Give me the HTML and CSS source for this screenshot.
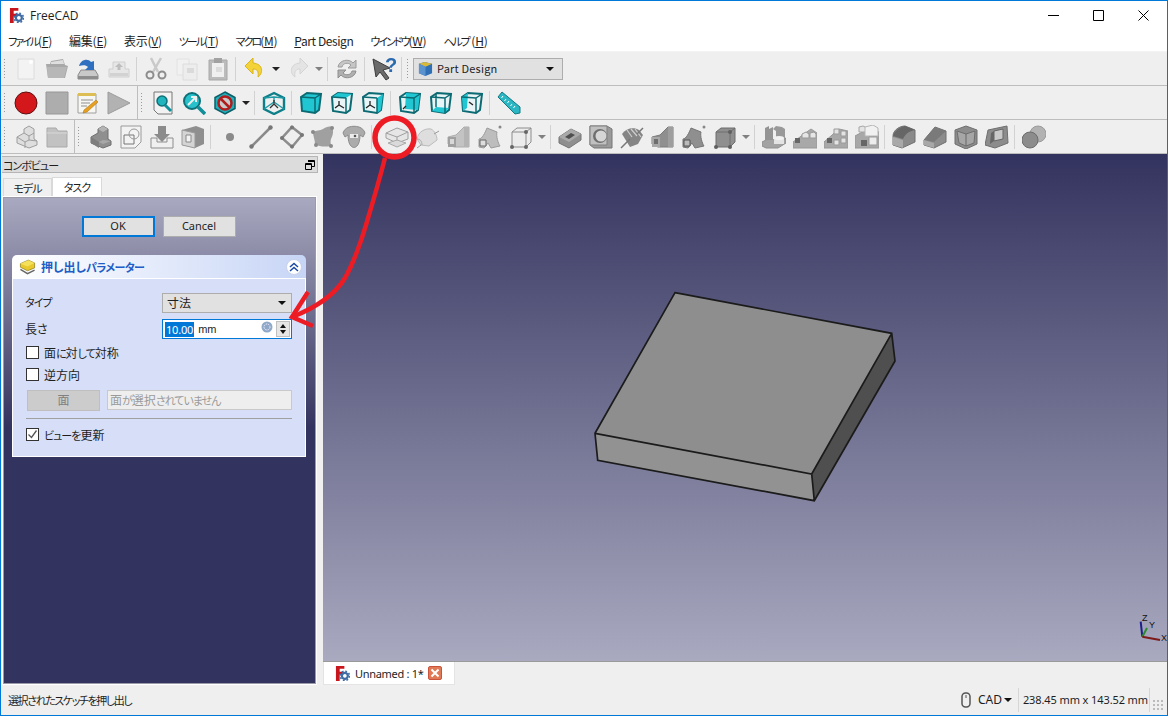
FILE: index.html
```html
<!DOCTYPE html>
<html lang="ja">
<head>
    <meta charset="UTF-8">
    <title>FreeCAD</title>
    <link rel="stylesheet" href="styles.css">
</head>
<body>
    <!-- Shared icons -->
    <svg class="defs" width="0" height="0">
        <defs>
            <symbol id="logo" viewBox="0 0 16 16"><path d="M1 0h9v3H5v3h4v3H5v7H1z" fill="#c8161d"/><circle cx="10.5" cy="10.5" r="3.2" fill="none" stroke="#3f6ca5" stroke-width="2.4"/><circle cx="10.5" cy="10.5" r="5" fill="none" stroke="#3f6ca5" stroke-width="1.6" stroke-dasharray="2 1.9"/></symbol>
            <symbol id="new" viewBox="0 0 24 24"><path d="M4 2h16v20H4z" fill="#f3f3f3" stroke="#dcdcdc"/><circle cx="17" cy="5" r="2" fill="#fff"/></symbol>
            <symbol id="open" viewBox="0 0 24 24"><path d="M3 21 1 7h4l1-3 12-2 2 6 3 1-3 12z" fill="#a8a8a8"/><path d="M6 5l12-2 1 4H6z" fill="#dedede"/><path d="M3 21 2 10h20l-3 11z" fill="#b7b7b7"/></symbol>
            <symbol id="save" viewBox="0 0 24 24"><path d="M5 13h14l3 5v4H2v-4z" fill="#c9c9c9" stroke="#8a8a8a"/><path d="M2 19h20v3H2z" fill="#8d8d8d"/><path d="M3 9C5 2 12 1 15 5l3-1v9h-9l3-3c-2-2-5-2-9-1z" fill="#2f6fc0"/></symbol>
            <symbol id="saveas" viewBox="0 0 24 24"><path d="M6 5h12v7h4v8H2v-8h4z" fill="#e6e6e6" stroke="#cfcfcf"/><path d="M12 6l4 4h-2.500v3h-3v-3H8z" fill="#bdbdbd"/><path d="M3 16h18v3H3z" fill="#d2d2d2"/></symbol>
            <symbol id="cut" viewBox="0 0 24 24"><path d="M7 1l7 14M17 1 9 15" stroke="#c9c9c9" stroke-width="2.500" fill="none"/><circle cx="6" cy="18" r="3.500" fill="none" stroke="#8c8c8c" stroke-width="2"/><circle cx="18" cy="18" r="3.500" fill="none" stroke="#8c8c8c" stroke-width="2"/></symbol>
            <symbol id="copy" viewBox="0 0 24 24"><path d="M2 2h12v16H2z" fill="#f1f1f1" stroke="#e2e2e2"/><path d="M8 7h14v16H8z" fill="#ededed" stroke="#dcdcdc"/><path d="M12 11h7v5h-7z" fill="#dadada"/></symbol>
            <symbol id="paste" viewBox="0 0 24 24"><path d="M3 3h18v20H3z" fill="#bcbcbc" stroke="#a8a8a8"/><path d="M6 6h12v14H6z" fill="#f0f0f0"/><path d="M8 1h8v5H8z" fill="#a2a2a2"/><path d="M10 10h6v5h-6z" fill="#dcdcdc"/></symbol>
            <symbol id="undo" viewBox="0 0 24 24"><path d="M10 1 2 9l8 8v-5c4 0 6 2 5 8 5-3 6-13-5-14z" fill="#f3d23a" stroke="#d9b41a"/></symbol>
            <symbol id="redo" viewBox="0 0 24 24"><path d="M14 1l8 8-8 8v-5c-4 0-6 2-5 8-5-3-6-13 5-14z" fill="#e4e4e4" stroke="#d4d4d4"/></symbol>
            <symbol id="refresh" viewBox="0 0 24 24"><path d="M3 10C4 3 14 1 18 6l3-3v8h-8l3-3c-3-3-8-2-9 2z" fill="#c6c6c6" stroke="#9c9c9c"/><path d="M21 14c-1 7-11 9-15 4l-3 3v-8h8l-3 3c3 3 8 2 9-2z" fill="#b0b0b0" stroke="#8e8e8e"/></symbol>
            <symbol id="whats" viewBox="0 0 24 24"><path d="M1 2l17 9-7 2 6 8-3 2-6-8-4 5z" fill="#6a6a6a" stroke="#3b3b3b"/><text x="13" y="15" font-size="20" font-weight="700" fill="#2c6ab0" font-family="Liberation Sans">?</text></symbol>
            <symbol id="record" viewBox="0 0 24 24"><circle cx="12" cy="12" r="11" fill="#d3171b" stroke="#5c1012"/></symbol>
            <symbol id="stop" viewBox="0 0 24 24"><path d="M1 1h22v22H1z" fill="#adadad" stroke="#979797"/></symbol>
            <symbol id="note" viewBox="0 0 24 24"><path d="M2 3h18v19H2z" fill="#f6f6f2" stroke="#9f9f9f"/><path d="M2 2h18v3H2z" fill="#dcbe55"/><path d="M5 9h12M5 12h9M5 15h6" stroke="#8f8f8f"/><path d="M8 19 20 9l2 2-11 10-4 1z" fill="#e8a020" stroke="#a06a10" stroke-width=".5"/></symbol>
            <symbol id="play" viewBox="0 0 24 24"><path d="M1 1l22 11L1 23z" fill="#b2b2b2" stroke="#9c9c9c"/></symbol>
            <symbol id="fitall" viewBox="0 0 24 24"><path d="M3 1h18v22H7l-4-4z" fill="#f2f2f2" stroke="#777"/><circle cx="11" cy="10" r="5" fill="#1fb4be" stroke="#0e6f78" stroke-width="1.500"/><path d="M14 14l6 6" stroke="#0e8f9a" stroke-width="3"/></symbol>
            <symbol id="fitsel" viewBox="0 0 24 24"><circle cx="10" cy="10" r="8" fill="#27c1cc" stroke="#0e6f78" stroke-width="2"/><path d="M6 14l7-7M9 6h5v5" stroke="#eee" stroke-width="2" fill="none"/><path d="M16 16l7 7" stroke="#0e8f9a" stroke-width="3.500"/></symbol>
            <symbol id="nodraw" viewBox="0 0 24 24"><path d="M12 1l10 5.500v11L12 23 2 17.500v-11z" fill="#1fb0bb" stroke="#0c5f68" stroke-width="1.500"/><circle cx="12" cy="12" r="6.500" fill="#c9c9c9" stroke="#b01c1c" stroke-width="2.500"/><path d="M7.500 7.500l9 9" stroke="#b01c1c" stroke-width="2.500"/></symbol>
            <symbol id="viso" viewBox="0 0 24 24"><path d="M12 2l10 5v11l-10 5-10-5V7z" fill="none" stroke="#0e7f89" stroke-width="2.400"/><path d="M2 7l10-1 10 1M12 6v5M2 18l10-7 10 7" fill="none" stroke="#1d9aa5" stroke-width="1.400"/><path d="M12 9v4M8 17l4-4 4 4" stroke="#333" stroke-width="1.300" fill="none"/></symbol>
            <symbol id="vfront" viewBox="0 0 24 24"><path d="M2 6l6-4 14 1-2 16-4 3-13-2z" fill="#20c6d2" stroke="#0c6a73" stroke-width="2"/><path d="M2 6l14 1 0 15M16 7l6-4" fill="none" stroke="#0c6a73" stroke-width="1.500"/></symbol>
            <symbol id="vtop" viewBox="0 0 24 24"><path d="M2 6l6-4 14 1-2 16-4 3-13-2z" fill="#e8f4f5" stroke="#0c6a73" stroke-width="2"/><path d="M2 6l6-4 14 1-6 4z" fill="#20c6d2"/><path d="M16 7v15M2 6l14 1" stroke="#0c6a73" stroke-width="1.500" fill="none"/><path d="M9 10v4l-4 3M9 14l5 3" stroke="#222" stroke-width="1.300" fill="none"/></symbol>
            <symbol id="vright" viewBox="0 0 24 24"><path d="M2 6l6-4 14 1-2 16-4 3-13-2z" fill="#e8f4f5" stroke="#0c6a73" stroke-width="2"/><path d="M16 7l6-4-2 16-4 3z" fill="#20c6d2"/><path d="M16 7v15M2 6l14 1" stroke="#0c6a73" stroke-width="1.500" fill="none"/><path d="M9 10v4l-4 3M9 14l5 3" stroke="#222" stroke-width="1.300" fill="none"/></symbol>
            <symbol id="vrear" viewBox="0 0 24 24"><path d="M2 6l6-4 14 1-2 16-4 3-13-2z" fill="#e8f4f5" stroke="#0c6a73" stroke-width="2"/><path d="M8 2l14 1-2 16-13-1z" fill="#20c6d2"/><path d="M2 6l14 1M16 7l6-4M16 7v15" stroke="#0c6a73" stroke-width="1.500" fill="none"/><path d="M8 15l-3 3" stroke="#222" stroke-width="1.300"/></symbol>
            <symbol id="vbottom" viewBox="0 0 24 24"><path d="M2 6l6-4 14 1-2 16-4 3-13-2z" fill="#e8f4f5" stroke="#0c6a73" stroke-width="2"/><path d="M7 16l13 1-4 5-13-2z" fill="#20c6d2"/><path d="M16 7v15M2 6l14 1M16 7l6-4M7 16V3" stroke="#0c6a73" stroke-width="1.500" fill="none"/></symbol>
            <symbol id="vleft" viewBox="0 0 24 24"><path d="M2 6l6-4 14 1-2 16-4 3-13-2z" fill="#e8f4f5" stroke="#0c6a73" stroke-width="2"/><path d="M2 6l6-4-1 15-4 3z" fill="#20c6d2"/><path d="M16 7v15M2 6l14 1M16 7l6-4" stroke="#0c6a73" stroke-width="1.500" fill="none"/><path d="M9 11l4 3" stroke="#222" stroke-width="1.300"/></symbol>
            <symbol id="ruler" viewBox="0 0 24 24"><path d="M1 6l4-5 18 15v6l-5 1z" fill="#2ab6c2" stroke="#127a84"/><path d="M6 5l-1.500 2M9 8l-1.500 2M12 10l-1.500 2M15 13l-1.500 2M18 15l-1.500 2" stroke="#fff"/></symbol>
            <symbol id="step-pale" viewBox="0 0 24 24"><path d="M3 12l7-4V4l5-3 5 3v10l3 2v4l-8 3-12-5z" fill="#dedede" stroke="#9d9d9d"/><path d="M10 8l5 3 5-3M15 11v4M3 12l8 5v6M11 17l4-2 8 1" fill="none" stroke="#9d9d9d"/></symbol>
            <symbol id="folder" viewBox="0 0 24 24"><path d="M2 3h9l2 3h9v16H2z" fill="#c2c2c2" stroke="#a9a9a9"/><path d="M2 8h20" stroke="#d8d8d8"/></symbol>
            <symbol id="step" viewBox="0 0 24 24"><path d="M3 12l7-4V4l5-3 5 3v10l3 2v4l-8 3-12-5z" fill="#8f8f8f" stroke="#6e6e6e"/><path d="M3 12l8 5v6L3 18z" fill="#7d7d7d"/><path d="M10 4l5 3 5-3-5-3z" fill="#b4b4b4"/><path d="M11 17l4-2 8 1-8 3z" fill="#a8a8a8"/></symbol>
            <symbol id="sketch" viewBox="0 0 24 24"><path d="M2 1h20v16l-6 6H2z" fill="#f3f3f3" stroke="#9a9a9a"/><path d="M5 10h10v9H5z" fill="none" stroke="#777"/><circle cx="15" cy="9" r="5" fill="none" stroke="#999"/></symbol>
            <symbol id="import" viewBox="0 0 24 24"><path d="M1 13h6v4h10v-4h6v10H1z" fill="#f0f0f0" stroke="#8d8d8d"/><path d="M8 1h8v8h4l-8 8-8-8h4z" fill="#8b8b8b"/></symbol>
            <symbol id="cubedoc" viewBox="0 0 24 24"><path d="M1 5l14-4 8 3v15l-9 4-13-3z" fill="#8f8f8f"/><path d="M1 5l13 3v15L1 20z" fill="#d4d4d4" stroke="#9a9a9a"/><path d="M5 10h5v7H5z" fill="#f2f2f2" stroke="#888"/></symbol>
            <symbol id="point" viewBox="0 0 24 24"><circle cx="12" cy="12" r="4" fill="#8a8a8a"/></symbol>
            <symbol id="line" viewBox="0 0 24 24"><path d="M2 22 22 2" stroke="#8a8a8a" stroke-width="2.500"/><circle cx="2.500" cy="21.500" r="2.200" fill="#777"/><circle cx="21.500" cy="2.500" r="2.200" fill="#777"/></symbol>
            <symbol id="diamond" viewBox="0 0 24 24"><path d="M12 2l10 8-10 12L2 13z" fill="none" stroke="#8d8d8d" stroke-width="2.500"/><circle cx="12" cy="2.500" r="2" fill="#777"/><circle cx="22" cy="10" r="2" fill="#777"/><circle cx="2" cy="13" r="2" fill="#777"/><circle cx="12" cy="21.500" r="2" fill="#777"/></symbol>
            <symbol id="blob" viewBox="0 0 24 24"><path d="M2 7c3-2 7-1 10-3 3-2 6-3 9-2 2 4 1 8-1 12-1 3 0 5 0 7-5 1-12 1-16-2 0-4-2-8-2-12z" fill="#a0a0a0"/><circle cx="21" cy="3" r="2" fill="#8a8a8a"/><circle cx="2" cy="7" r="2" fill="#8a8a8a"/><circle cx="20" cy="21" r="2" fill="#8a8a8a"/><circle cx="5" cy="20" r="2" fill="#8a8a8a"/></symbol>
            <symbol id="sheep" viewBox="0 0 24 24"><path d="M7 2c3-1 7-1 10 0 3 1 5 3 6 6l-2 4-3-2c0 5-1 9-3 11-2 2-4 2-6 0-2-2-3-6-3-11l-3 2-2-4c1-3 3-5 6-6z" fill="#ababab" stroke="#8c8c8c"/><path d="M8 9h8v4H8z" fill="#ececec"/><circle cx="13" cy="11" r="1.300" fill="#555"/></symbol>
            <symbol id="pad" viewBox="0 0 24 24"><path d="M1 8l11-5 11 4v7l-11 4-11-5z" fill="#e6e6e6" stroke="#9f9f9f"/><path d="M1 8l11 4 11-5M12 12v6" fill="none" stroke="#9f9f9f"/><path d="M3 18l9-3 9 3-9 4z" fill="#dadada" stroke="#a8a8a8"/></symbol>
            <symbol id="revolve" viewBox="0 0 24 24"><path d="M1 14C2 7 9 3 15 4c4 2 6 7 6 11l-8 6-8-1z" fill="#dedede" stroke="#bbb"/><path d="M1 14c3 0 5 2 5 6" fill="none" stroke="#aaa"/><path d="M18 9l5-3M1 23l4-3" stroke="#999"/></symbol>
            <symbol id="loft" viewBox="0 0 24 24"><path d="M1 12l8-2 8-8h5v20H7l-6-3z" fill="#c3c3c3" stroke="#adadad"/><path d="M17 2h5v20h-5z" fill="#b4b4b4"/><path d="M1 12h8v10H1z" fill="#a0a0a0"/><path d="M3 14h4v5H3z" fill="#d8d8d8"/></symbol>
            <symbol id="sweep" viewBox="0 0 24 24"><path d="M1 22v-8c3 0 6-6 8-11l10 4c-1 4 1 11 3 14l-9 2-3-5-4 5z" fill="#bdbdbd" stroke="#9a9a9a"/><path d="M2 15h6v6H2z" fill="#ddd" stroke="#666"/><circle cx="22" cy="2" r="1.500" fill="#888"/></symbol>
            <symbol id="addbox" viewBox="0 0 24 24"><path d="M3 7l5-4h14v14l-5 5H3z" fill="#ececec" stroke="#8c8c8c"/><path d="M3 7h14v15M17 7l5-4" fill="none" stroke="#8c8c8c"/><circle cx="17" cy="7" r="2" fill="#666"/><circle cx="3" cy="22" r="2" fill="#666"/><circle cx="17" cy="22" r="2" fill="#666"/></symbol>
            <symbol id="pocket" viewBox="0 0 24 24"><path d="M1 12 13 4l10 5v6l-12 8-10-5z" fill="#8f8f8f" stroke="#747474"/><path d="M1 12l10 5 12-8-10-5z" fill="#a9a9a9"/><path d="M7 12l6-4 4 2-6 4z" fill="#4f4f4f"/></symbol>
            <symbol id="hole" viewBox="0 0 24 24"><path d="M1 1h17l5 3v19H5l-4-3z" fill="#9a9a9a" stroke="#777"/><path d="M1 1h17v19H1z" fill="#c0c0c0" stroke="#808080"/><circle cx="11" cy="11" r="7" fill="#6e6e6e"/><circle cx="12" cy="11" r="5.500" fill="#d6d6d6"/></symbol>
            <symbol id="groove" viewBox="0 0 24 24"><path d="M2 9C6 3 14 2 19 5l4 5-5 9-8 3z" fill="#858585"/><path d="M7 5l5 7M11 4l6 7M15 4l6 8" stroke="#cfcfcf" stroke-width="1.200"/><path d="M1 23l9-9M17 9l6-6" stroke="#777" stroke-width="1.500"/></symbol>
            <symbol id="subloft" viewBox="0 0 24 24"><path d="M1 12l8-2 8-8h5v20H7l-6-3z" fill="#8f8f8f" stroke="#7a7a7a"/><path d="M17 2h5v20h-5z" fill="#9e9e9e"/><path d="M1 12h8v10H1z" fill="#a8a8a8"/><path d="M3 14h4v5H3z" fill="#6e6e6e"/></symbol>
            <symbol id="subsweep" viewBox="0 0 24 24"><path d="M1 22v-8c3 0 6-6 8-11l10 4c-1 4 1 11 3 14l-9 2-3-5-4 5z" fill="#8f8f8f" stroke="#747474"/><path d="M2 15h6v6H2z" fill="#bbb" stroke="#555"/><circle cx="22" cy="2" r="1.500" fill="#888"/></symbol>
            <symbol id="subbox" viewBox="0 0 24 24"><path d="M3 7l5-4h14v14l-5 5H3z" fill="#8f8f8f" stroke="#6e6e6e"/><path d="M3 7h14v15M17 7l5-4" fill="none" stroke="#6e6e6e"/><circle cx="17" cy="7" r="2" fill="#5f5f5f"/><circle cx="3" cy="22" r="2" fill="#5f5f5f"/><circle cx="17" cy="22" r="2" fill="#5f5f5f"/></symbol>
            <symbol id="mirror" viewBox="0 0 24 24"><path d="M0 17l8-4 8 4 8-4v5l-8 5H4l-4-2z" fill="#a2a2a2" stroke="#909090"/><path d="M3 3l4-2v3l4-2v13H3z" fill="#949494"/><path d="M14 6l-3-2 3-3 6 1 3 2v11h-9z" fill="#999"/><path d="M12 13h10v6H12z" fill="#e3e3e3"/><ellipse cx="17" cy="13" rx="5" ry="2" fill="#f2f2f2"/></symbol>
            <symbol id="linear" viewBox="0 0 24 24"><path d="M0 17 18 4l6 4v15H0z" fill="#a8a8a8" stroke="#989898"/><path d="M2 13h5v5H2z" fill="#666"/><path d="M9 9l4-2 3 2v4H9zM17 8l4-1 2 2v4h-6z" fill="#e6e6e6" stroke="#999"/></symbol>
            <symbol id="polar" viewBox="0 0 24 24"><path d="M0 17 15 4l9 2v17H0z" fill="#a8a8a8" stroke="#989898"/><path d="M3 13h5v5H3z" fill="#666"/><path d="M10 4h5v5h-5zM17 6h5v5h-5zM17 13h5v5h-5zM10 15h5v5h-5z" fill="#e3e3e3" stroke="#999"/></symbol>
            <symbol id="multi" viewBox="0 0 24 24"><path d="M0 11 13 4l11 3v16H0z" fill="#a8a8a8" stroke="#989898"/><path d="M4 2l4-1 4 2v4H4z" fill="#e3e3e3" stroke="#a5a5a5"/><path d="M10 2l8-2 5 3v8H10z" fill="#f1f1f1" stroke="#b5b5b5"/><path d="M14 12h8v8h-8z" fill="#ececec" stroke="#999"/><path d="M6 15h6v6H6z" fill="#666"/></symbol>
            <symbol id="fillet" viewBox="0 0 24 24"><path d="M1 11C1 5 8 1 13 1l10 4v12l-13 6-9-3z" fill="#8a8a8a" stroke="#707070"/><path d="M1 11C2 6 8 2 13 1l10 4c-6 1-10 4-12 9z" fill="#666"/><path d="M1 12l10 3v8l-10-3z" fill="#a8a8a8"/></symbol>
            <symbol id="chamfer" viewBox="0 0 24 24"><path d="M1 15 12 2l11 4v11l-12 6-10-3z" fill="#8d8d8d" stroke="#707070"/><path d="M1 15 12 2l11 4-12 11z" fill="#7a7a7a"/><path d="M1 15l10 3v5l-10-3z" fill="#a8a8a8"/></symbol>
            <symbol id="draft" viewBox="0 0 24 24"><path d="M1 5l11-4 11 4v14l-11 5-11-5z" fill="#8c8c8c" stroke="#6e6e6e"/><path d="M3 6l9 3 9-3-1 12-8 3-7-3z" fill="#a6a6a6" stroke="#6e6e6e"/><path d="M12 9v12" stroke="#666"/></symbol>
            <symbol id="thick" viewBox="0 0 24 24"><path d="M3 5l19-4 1 17-13 5-10-3z" fill="#8c8c8c" stroke="#6e6e6e"/><path d="M9 6l9-2v10l-9 2z" fill="#c9c9c9" stroke="#666"/><path d="M9 6v10l-4 3 1-11z" fill="#666"/></symbol>
            <symbol id="bool" viewBox="0 0 24 24"><circle cx="16" cy="9" r="8" fill="#b2b2b2" stroke="#9a9a9a"/><circle cx="8" cy="15" r="8" fill="#8c8c8c" stroke="#6c6c6c"/></symbol>
        </defs>
    </svg>

    <div class="window">
        <!-- Title bar -->
        <div class="title-bar">
            <svg class="title-logo"><use href="#logo"/></svg>
            <span class="title-text">FreeCAD</span>
            <div class="win-buttons">
                <span class="win-btn"><svg width="11" height="11"><path d="M0 5.500h11" stroke="#000"/></svg></span>
                <span class="win-btn"><svg width="11" height="11"><path d="M.5.500h10v10H.5z" fill="none" stroke="#000"/></svg></span>
                <span class="win-btn"><svg width="11" height="11"><path d="M.5.500l10 10M10.500.500l-10 10" stroke="#000"/></svg></span>
            </div>
        </div>

        <!-- Menu -->
        <div class="menu-bar">
            <a><span class="k">ファイル</span>(<u>F</u>)</a>
            <a>編集(<u>E</u>)</a>
            <a>表示(<u>V</u>)</a>
            <a><span class="k">ツール</span>(<u>T</u>)</a>
            <a><span class="k">マクロ</span>(<u>M</u>)</a>
            <a class="latin"><u>P</u>art Design</a>
            <a><span class="k">ウインドウ</span>(<u>W</u>)</a>
            <a><span class="k">ヘルプ</span> (<u>H</u>)</a>
        </div>

        <!-- Toolbars -->
        <div class="tool-row">
            <div class="toolbar">
                <i class="grip"></i>
                <b class="tb"><svg class="ico"><use href="#new"/></svg></b>
                <b class="tb"><svg class="ico"><use href="#open"/></svg></b>
                <b class="tb"><svg class="ico"><use href="#save"/></svg></b>
                <b class="tb"><svg class="ico"><use href="#saveas"/></svg></b>
                <i class="sep"></i>
                <b class="tb"><svg class="ico"><use href="#cut"/></svg></b>
                <b class="tb"><svg class="ico"><use href="#copy"/></svg></b>
                <b class="tb"><svg class="ico"><use href="#paste"/></svg></b>
                <i class="sep"></i>
                <b class="tb"><svg class="ico"><use href="#undo"/></svg></b><i class="drop"></i>
                <b class="tb"><svg class="ico"><use href="#redo"/></svg></b><i class="drop pale"></i>
                <i class="sep"></i>
                <b class="tb"><svg class="ico"><use href="#refresh"/></svg></b>
                <i class="sep"></i>
                <b class="tb"><svg class="ico"><use href="#whats"/></svg></b>
                <i class="sep"></i>
            </div>
            <div class="toolbar wb-bar">
                <i class="grip"></i>
                <div class="combo">
                    <svg class="combo-ico" viewBox="0 0 16 16"><path d="M1 3l6-2 8 2v10l-7 3-7-3z" fill="#2f6fb5"/><path d="M1 3l6-2 8 2-7 3z" fill="#d9b93c"/><path d="M1 3l7 3v10l-7-3z" fill="#5b93cf"/></svg>
                    <span class="combo-text">Part Design</span>
                    <i class="combo-arrow"></i>
                </div>
            </div>
        </div>
        <div class="tool-row">
            <div class="toolbar bounded macro-bar">
                <i class="grip"></i>
                <b class="tb"><svg class="ico"><use href="#record"/></svg></b>
                <b class="tb"><svg class="ico"><use href="#stop"/></svg></b>
                <b class="tb"><svg class="ico"><use href="#note"/></svg></b>
                <b class="tb"><svg class="ico"><use href="#play"/></svg></b>
            </div>
            <div class="toolbar">
                <i class="grip"></i>
                <b class="tb"><svg class="ico"><use href="#fitall"/></svg></b>
                <b class="tb"><svg class="ico"><use href="#fitsel"/></svg></b>
                <b class="tb"><svg class="ico"><use href="#nodraw"/></svg></b><i class="drop"></i>
                <i class="sep"></i>
                <b class="tb"><svg class="ico"><use href="#viso"/></svg></b>
                <i class="sep"></i>
                <b class="tb"><svg class="ico"><use href="#vfront"/></svg></b>
                <b class="tb"><svg class="ico"><use href="#vtop"/></svg></b>
                <b class="tb"><svg class="ico"><use href="#vright"/></svg></b>
                <i class="sep"></i>
                <b class="tb"><svg class="ico"><use href="#vrear"/></svg></b>
                <b class="tb"><svg class="ico"><use href="#vbottom"/></svg></b>
                <b class="tb"><svg class="ico"><use href="#vleft"/></svg></b>
                <i class="sep"></i>
                <b class="tb"><svg class="ico"><use href="#ruler"/></svg></b>
            </div>
        </div>
        <div class="tool-row">
            <div class="toolbar bounded start-bar">
                <i class="grip"></i>
                <b class="tb"><svg class="ico"><use href="#step-pale"/></svg></b>
                <b class="tb"><svg class="ico"><use href="#folder"/></svg></b>
            </div>
            <div class="toolbar">
                <i class="grip"></i>
                <b class="tb"><svg class="ico"><use href="#step"/></svg></b>
                <b class="tb"><svg class="ico"><use href="#sketch"/></svg></b>
                <b class="tb"><svg class="ico"><use href="#import"/></svg></b>
                <b class="tb"><svg class="ico"><use href="#cubedoc"/></svg></b>
                <i class="sep"></i>
                <b class="tb"><svg class="ico"><use href="#point"/></svg></b>
                <b class="tb"><svg class="ico"><use href="#line"/></svg></b>
                <b class="tb"><svg class="ico"><use href="#diamond"/></svg></b>
                <b class="tb"><svg class="ico"><use href="#blob"/></svg></b>
                <b class="tb"><svg class="ico"><use href="#sheep"/></svg></b>
                <i class="sep wide"></i>
                <b class="tb"><svg class="ico"><use href="#pad"/></svg></b>
                <b class="tb"><svg class="ico"><use href="#revolve"/></svg></b>
                <b class="tb"><svg class="ico"><use href="#loft"/></svg></b>
                <b class="tb"><svg class="ico"><use href="#sweep"/></svg></b>
                <b class="tb"><svg class="ico"><use href="#addbox"/></svg></b><i class="drop pale"></i>
                <i class="sep"></i>
                <b class="tb"><svg class="ico"><use href="#pocket"/></svg></b>
                <b class="tb"><svg class="ico"><use href="#hole"/></svg></b>
                <b class="tb"><svg class="ico"><use href="#groove"/></svg></b>
                <b class="tb"><svg class="ico"><use href="#subloft"/></svg></b>
                <b class="tb"><svg class="ico"><use href="#subsweep"/></svg></b>
                <b class="tb"><svg class="ico"><use href="#subbox"/></svg></b><i class="drop pale"></i>
                <i class="sep"></i>
                <b class="tb"><svg class="ico"><use href="#mirror"/></svg></b>
                <b class="tb"><svg class="ico"><use href="#linear"/></svg></b>
                <b class="tb"><svg class="ico"><use href="#polar"/></svg></b>
                <b class="tb"><svg class="ico"><use href="#multi"/></svg></b>
                <i class="sep"></i>
                <b class="tb"><svg class="ico"><use href="#fillet"/></svg></b>
                <b class="tb"><svg class="ico"><use href="#chamfer"/></svg></b>
                <b class="tb"><svg class="ico"><use href="#draft"/></svg></b>
                <b class="tb"><svg class="ico"><use href="#thick"/></svg></b>
                <i class="sep"></i>
                <b class="tb"><svg class="ico"><use href="#bool"/></svg></b>
            </div>
        </div>

        <div class="main">
            <!-- Combo view -->
            <div class="side">
                <div class="dock-title">
                    <span class="k">コンボビュー</span>
                    <svg width="10" height="10"><path d="M3 .500h6.500v6H7M.500 3.500h6v6h-6z" fill="none" stroke="#000"/><path d="M3 1.500h6.500M.500 4.500h6" stroke="#000"/></svg>
                </div>
                <div class="tabs">
                    <span class="tab"><span class="k">モデル</span></span>
                    <span class="tab active"><span class="k">タスク</span></span>
                </div>
                <div class="task-pane">
                    <div class="dialog-btns">
                        <span class="btn default">OK</span>
                        <span class="btn">Cancel</span>
                    </div>
                    <div class="task-box">
                        <div class="task-head">
                            <svg width="17" height="17" viewBox="0 0 24 24"><path d="M2 8l11-5 9 4v7l-10 4-10-5z" fill="#e8c82c" stroke="#8a7a18"/><path d="M2 8l10 4 10-5-9-4z" fill="#f4e05a"/><path d="M2 16l10 6 10-5" fill="none" stroke="#666" stroke-width="2"/></svg>
                            <span class="task-title">押し出し<span class="k">パラメーター</span></span>
                            <span class="collapse"><svg width="10" height="10"><path d="M1 5l4-3.500L9 5M1 9l4-3.500L9 9" fill="none" stroke="#1a48a8" stroke-width="1.500"/></svg></span>
                        </div>
                        <div class="task-body">
                            <div class="form-row">
                                <label class="k">タイプ</label>
                                <div class="select"><span>寸法</span><i class="combo-arrow"></i></div>
                            </div>
                            <div class="form-row">
                                <label>長さ</label>
                                <div class="spin">
                                    <span class="sel-text">10.00</span><span class="unit">mm</span>
                                    <svg class="fx" width="12" height="12" viewBox="0 0 12 12"><circle cx="6" cy="6" r="5.500" fill="#8fa8c8"/><circle cx="6" cy="6" r="3" fill="none" stroke="#eef" stroke-dasharray="1.500 1"/></svg>
                                    <span class="spin-btns"><i class="up"></i><i class="down"></i></span>
                                </div>
                            </div>
                            <div class="check first"><i class="box"></i><span>面<span class="k">に</span>対<span class="k">して</span>対称</span></div>
                            <div class="check"><i class="box"></i>逆方向</div>
                            <div class="face-row">
                                <span class="face-btn">面</span>
                                <span class="face-input">面<span class="k">が</span>選択<span class="k">されていません</span></span>
                            </div>
                            <hr class="rule">
                            <div class="check">
                                <i class="box"><svg width="13" height="13"><path d="M2.500 6.500l3 3 5-7" fill="none" stroke="#555" stroke-width="1.300"/></svg></i><span><span class="k">ビューを</span>更新</span>
                            </div>
                        </div>
                    </div>
                </div>
            </div>

            <!-- 3D view -->
            <div class="view-col">
                <div class="viewport">
                    <svg class="scene" viewBox="323 154 845 508">
                        <path d="M675 292.700 891.700 333.300 811.700 474 595 433.300z" fill="#8e8e8e"/>
                        <path d="M595 433.300 811.700 474 814.300 500.700 597.700 460.300z" fill="#929292"/>
                        <path d="M891.700 333.300 895 361 814.300 500.700 811.700 474z" fill="#4f4f4f"/>
                        <path d="M675 292.700 891.700 333.300 895 361 814.300 500.700 597.700 460.300 595 433.300zM595 433.300 811.700 474 891.700 333.300M811.700 474 814.300 500.700" fill="none" stroke="#1b1b1b" stroke-width="1.700"/>
                        <path d="M1142.300 636.700 1140.700 621.700" stroke="#1f1f8c" stroke-width="2"/>
                        <path d="M1142.300 636.700 1147 628" stroke="#2c8c2c" stroke-width="2"/>
                        <path d="M1142.300 636.700 1160 640" stroke="#7d1a1a" stroke-width="2"/>
                        <text x="1142" y="621" class="axis">Z</text>
                        <text x="1149" y="628" class="axis">Y</text>
                        <text x="1161" y="641" class="axis">X</text>
                    </svg>
                </div>
                <div class="doc-tabs">
                    <div class="doc-tab">
                        <svg class="doc-logo"><use href="#logo"/></svg>
                        <span class="doc-name">Unnamed : 1*</span>
                        <span class="doc-close"><svg width="10" height="10"><path d="M1.500 1.500l7 7M8.500 1.500l-7 7" stroke="#fff" stroke-width="2"/></svg></span>
                    </div>
                </div>
            </div>
        </div>

        <!-- Status bar -->
        <div class="status-bar">
            <span class="status-msg">選択されたスケッチを押し出し</span>
            <svg class="mouse" width="10" height="16"><rect x="1" y="1" width="8" height="14" rx="3.500" fill="none" stroke="#555" stroke-width="1.500"/><path d="M5 3v3" stroke="#555"/></svg>
            <span class="nav-style">CAD<i class="combo-arrow"></i></span>
            <i class="status-sep"></i>
            <span class="status-size">238.45 mm x 143.52 mm</span>
            <i class="status-sep last"></i>
            <i class="size-grip"></i>
        </div>

        <!-- Red hand-drawn note over the window -->
        <svg class="note" viewBox="0 0 1168 716">
            <circle cx="394.500" cy="137.500" r="19.500" fill="none" stroke="#ed1c24" stroke-width="5.500"/>
            <path d="M385 158C378 185 372 205 366 225C360 245 354 262 345 278C334 296 315 308 292 317" fill="none" stroke="#ed1c24" stroke-width="4.500"/>
            <path d="M308 292 292 317 313 326" fill="none" stroke="#ed1c24" stroke-width="4.500"/>
        </svg>
    </div>
</body>
</html>
```

FILE: styles.css
```css
* {
    box-sizing: border-box;
}

body {
    margin: 0;
    padding: 0;
    background-color: #efefef;
    color: #1e1e1e;
    font-family: "Noto Sans CJK JP", "Noto Sans", sans-serif;
    font-size: 12px;
    font-feature-settings: "palt";
}

/* Kana is set much narrower than kanji in this UI font */
.k {
    font-size: 11px;
    letter-spacing: -1px;
}

.defs {
    position: absolute;
}

.window {
    position: relative;
    display: flex;
    flex-direction: column;
    width: 1168px;
    height: 716px;
    overflow: hidden;
    border: 1px solid #0078d7;
}

/* Title bar */
.title-bar {
    display: flex;
    align-items: center;
    height: 29px;
    flex: none;
    padding-left: 8px;
    background-color: #ffffff;
}

.title-logo {
    width: 15px;
    height: 15px;
}

.title-text {
    margin-left: 6px;
    font-family: "Open Sans", sans-serif;
    font-size: 12px;
}

.win-buttons {
    display: flex;
    margin-left: auto;
    margin-right: 1px;
}

.win-btn {
    display: flex;
    align-items: center;
    justify-content: center;
    width: 45px;
    height: 29px;
}

/* Menu */
.menu-bar {
    display: flex;
    align-items: center;
    gap: 17px;
    height: 22px;
    flex: none;
    padding-left: 7px;
    background-color: #ffffff;
    border-bottom: 1px solid #f4f4f4;
    white-space: nowrap;
    letter-spacing: -0.25px;
}

.menu-bar .k {
    letter-spacing: -2px;
}

.menu-bar .latin {
    letter-spacing: -0.4px;
}

/* Toolbars */
.tool-row {
    display: flex;
    height: 34px;
    flex: none;
    border-bottom: 1px solid #bdbdbd;
    background-color: #efefef;
}

.toolbar {
    display: flex;
    align-items: center;
    padding-left: 2px;
}

.toolbar.bounded {
    border-right: 1px solid #bdbdbd;
}

.macro-bar {
    width: 137px;
}

.start-bar {
    width: 74px;
}

.grip {
    width: 3px;
    height: 22px;
    margin-right: 4px;
    flex: none;
    background-image: radial-gradient(circle, #9a9a9a 0.8px, transparent 1px);
    background-size: 3px 3px;
}

.tb {
    display: flex;
    align-items: center;
    justify-content: center;
    width: 31px;
    height: 30px;
    flex: none;
}

.ico {
    width: 24px;
    height: 24px;
    filter: blur(0.4px);
}

.sep {
    width: 1px;
    height: 24px;
    margin: 0 3px 0 2px;
    flex: none;
    background-color: #d2d2d2;
}

.sep.wide {
    margin-right: 9px;
}

.drop {
    position: relative;
    width: 12px;
    height: 10px;
    flex: none;
}

.drop::after {
    content: "";
    position: absolute;
    left: 2px;
    top: 3px;
    border-left: 4px solid transparent;
    border-right: 4px solid transparent;
    border-top: 4px solid #222222;
}

.drop.pale::after {
    border-top-color: #808080;
}

.wb-bar {
    padding-left: 1px;
}

.combo {
    display: flex;
    align-items: center;
    width: 150px;
    height: 22px;
    padding: 0 8px 0 4px;
    background-color: #e1e1e1;
    border: 1px solid #adadad;
}

.combo-ico {
    width: 15px;
    height: 15px;
    margin-right: 4px;
}

.combo-text {
    margin-bottom: 2px;
    font-size: 11px;
    letter-spacing: 0.2px;
}

.combo-arrow {
    display: inline-block;
    margin-left: auto;
    border-left: 4px solid transparent;
    border-right: 4px solid transparent;
    border-top: 4px solid #111111;
}

/* Main area */
.main {
    display: flex;
    flex: 1;
    min-height: 0;
}

.side {
    display: flex;
    flex-direction: column;
    width: 322px;
    flex: none;
    padding: 2px 5px 2px 1px;
    background-color: #f0f0f0;
}

.dock-title {
    display: flex;
    align-items: center;
    justify-content: space-between;
    height: 17px;
    flex: none;
    padding: 0 2px 0 1px;
    background-color: #dcdcdc;
    border: 1px solid #b5b5b5;
    border-left: none;
}

.tabs {
    display: flex;
    height: 20px;
    flex: none;
    margin-top: 4px;
    padding-left: 1px;
}

.tab {
    width: 49px;
    height: 19px;
    margin-top: 1px;
    text-align: center;
    line-height: 17px;
    border: 1px solid #d9d9d9;
    border-bottom: none;
}

.tab.active {
    width: 50px;
    height: 20px;
    margin-top: 0;
    background-color: #ffffff;
}

.task-pane {
    flex: 1;
    margin: 0 2px 0 1px;
    background-color: #33335f;
    background-image: linear-gradient(#a9a9c0, #33335f 230px);
    border: 1px solid #9a9aa8;
    outline: 1px solid #ffffff;
}

.dialog-btns {
    display: flex;
    justify-content: center;
    gap: 8px;
    padding: 18px 2px 0 0;
}

.btn {
    width: 73px;
    height: 21px;
    text-align: center;
    line-height: 18px;
    background-color: #e1e1e1;
    border: 1px solid #adadad;
    font-family: "Noto Sans", sans-serif;
    font-size: 11px;
}

.btn.default {
    border: 2px solid #0078d7;
    line-height: 16px;
}

.task-box {
    width: 294px;
    margin: 18px 0 0 8px;
}

.task-head {
    display: flex;
    align-items: center;
    height: 24px;
    padding: 0 4px 0 7px;
    background-image: linear-gradient(to right, #ffffff, #c7d5f6);
    border-radius: 5px 5px 0 0;
    border-bottom: 1px solid #ffffff;
}

.task-title {
    margin-left: 5px;
    color: #215dc6;
    font-weight: 700;
}

.task-title .k {
    letter-spacing: -0.6px;
}

.collapse {
    display: flex;
    align-items: center;
    justify-content: center;
    width: 16px;
    height: 16px;
    margin-left: auto;
    background-color: #ffffff;
    border: 1px solid #c8d2ec;
    border-radius: 50%;
}

.task-body {
    height: 178px;
    padding: 14px 13px 0 12px;
    background-color: #d6dff7;
    border: 1px solid #ffffff;
    border-top: none;
}

.form-row {
    display: grid;
    grid-template-columns: 137px 130px;
    align-items: center;
    margin-bottom: 6px;
}

.form-row label {
    padding-bottom: 2px;
}

.select {
    display: flex;
    align-items: center;
    height: 20px;
    padding: 0 5px 2px 4px;
    background-color: #e1e1e1;
    border: 1px solid #adadad;
}

.select .combo-arrow {
    margin-top: 2px;
}

.spin {
    position: relative;
    display: flex;
    align-items: center;
    height: 20px;
    padding-left: 2px;
    background-color: #ffffff;
    border: 1px solid #0078d7;
}

.sel-text {
    height: 15px;
    padding: 0 1px;
    line-height: 15px;
    color: #ffffff;
    background-color: #0078d7;
    font-family: "Noto Sans", sans-serif;
    font-size: 11px;
    letter-spacing: -0.2px;
}

.unit {
    margin-left: 4px;
    font-family: "Liberation Sans", sans-serif;
    font-size: 11px;
}

.fx {
    position: absolute;
    right: 18px;
    top: 1px;
}

.spin-btns {
    position: absolute;
    right: 1px;
    top: 1px;
    display: flex;
    flex-direction: column;
    width: 14px;
    height: 16px;
    background-color: #e6e6e6;
    border: 1px solid #c0c0c0;
}

.spin-btns i {
    width: 0;
    margin: 2px auto 0;
    border-left: 3px solid transparent;
    border-right: 3px solid transparent;
}

.spin-btns .up {
    border-bottom: 4px solid #111111;
}

.spin-btns .down {
    border-top: 4px solid #111111;
}

.check {
    display: flex;
    align-items: center;
    height: 14px;
    margin: 8px 0 0 1px;
}

.check.first {
    margin-top: 6px;
}

.box {
    display: block;
    width: 13px;
    height: 13px;
    margin-right: 5px;
    background-color: #ffffff;
    border: 1px solid #333333;
    flex: none;
}

.box svg {
    display: block;
    margin: -1px;
}

.face-row {
    display: flex;
    margin: 9px 0 0 2px;
}

.face-btn {
    width: 73px;
    height: 21px;
    text-align: center;
    line-height: 18px;
    color: #808080;
    background-color: #cccccc;
    border: 1px solid #bfbfbf;
}

.face-input {
    width: 185px;
    height: 20px;
    margin-left: 7px;
    padding-left: 2px;
    line-height: 17px;
    color: #9a9a9a;
    background-color: #eeeeee;
    border: 1px solid #c9c9c9;
}

.rule {
    height: 1px;
    margin: 7px 0 8px 1px;
    border: none;
    background-color: #a0a0a0;
}

/* 3D view */
.view-col {
    display: flex;
    flex-direction: column;
    flex: 1;
    min-width: 0;
}

.viewport {
    position: relative;
    flex: 1;
    background-image: linear-gradient(#33335f, #a9a9c0);
    border-bottom: 1px solid #9a9a9a;
}

.scene {
    position: absolute;
    left: 0;
    top: 0;
    width: 845px;
    height: 508px;
}

.axis {
    font-family: "Liberation Sans", sans-serif;
    font-size: 9px;
    fill: #111111;
}

.doc-tabs {
    height: 24px;
    flex: none;
}

.doc-tab {
    display: flex;
    align-items: center;
    width: 132px;
    height: 23px;
    padding-left: 11px;
    background-color: #ffffff;
    border: 1px solid #e4e4e4;
    border-top: none;
    font-family: "Noto Sans", sans-serif;
    font-size: 11px;
}

.doc-logo {
    width: 15px;
    height: 15px;
    margin-right: 5px;
}

.doc-name {
    letter-spacing: -0.3px;
}

.doc-close {
    display: flex;
    align-items: center;
    justify-content: center;
    width: 14px;
    height: 14px;
    margin-left: 5px;
    background-color: #e07a56;
    border: 1px solid #c9543a;
    border-radius: 2px;
}

/* Status bar */
.status-bar {
    display: flex;
    align-items: center;
    height: 29px;
    flex: none;
    padding: 0 0 2px 7px;
    background-color: #efefef;
}

.status-msg {
    margin-right: auto;
    font-size: 11px;
    letter-spacing: -1.4px;
}

.mouse {
    margin-right: 7px;
}

.nav-style {
    display: flex;
    align-items: center;
    width: 34px;
    font-family: "Noto Sans", sans-serif;
}

.status-sep {
    width: 1px;
    height: 24px;
    margin: 0 4px 0 6px;
    background-color: #d6d6d6;
}

.status-sep.last {
    margin: 0 2px 0 1px;
}

.status-size {
    font-family: "Noto Sans", sans-serif;
    font-size: 11px;
    letter-spacing: -0.1px;
    white-space: nowrap;
}

.size-grip {
    width: 12px;
    height: 12px;
    margin: 10px 3px 0 0;
    background-image: radial-gradient(circle, #bbbbbb 0.9px, transparent 1px);
    background-size: 4px 4px;
}

/* Annotation on top of everything */
.note {
    position: absolute;
    left: -1px;
    top: -1px;
    width: 1168px;
    height: 716px;
    pointer-events: none;
}
```
